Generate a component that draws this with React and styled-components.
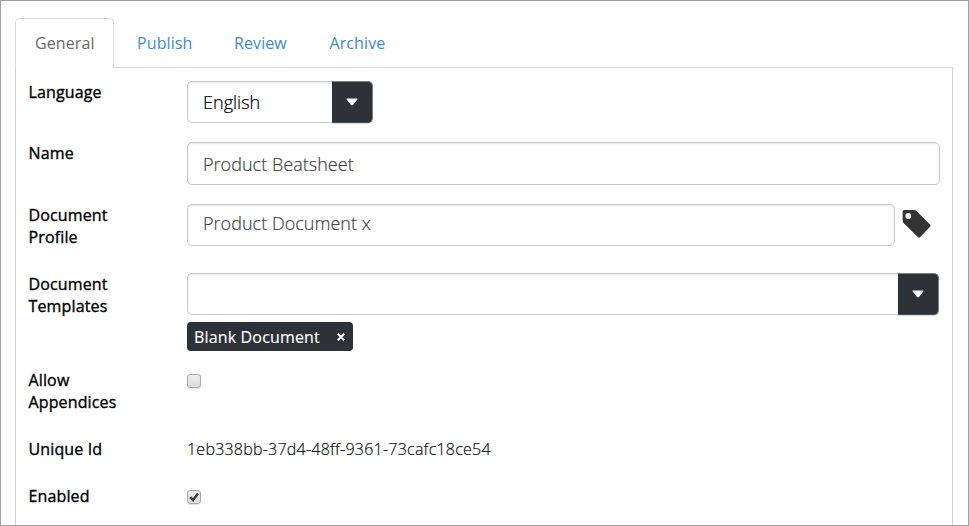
import React from 'react';
import styled, { createGlobalStyle } from 'styled-components';

const GlobalStyle = createGlobalStyle`
  * { box-sizing: border-box; }
  body { margin: 0; background: #fff; overflow: hidden; }
`;

const Frame = styled.main`
  height: 526px;
  padding: 17px 15px 0 14px;
  border: 1px solid #a0a0a0;
  overflow: hidden;
  display: flex;
  flex-direction: column;
  font: 400 16px/22px 'Open Sans', sans-serif;
  color: #333;
`;

const Tabs = styled.nav`
  display: flex;
  height: 50px;
  flex: none;
  border-bottom: 1px solid #d9d9d9;
`;

const Tab = styled.a`
  width: ${(p) => p.$width}px;
  height: 50px;
  padding: 13px 0 0 19px;
  border: 1px solid ${(p) => (p.$active ? '#d9d9d9' : 'transparent')};
  border-bottom: ${(p) => (p.$active ? '1px solid #fff' : '0')};
  border-radius: 5px 5px 0 0;
  color: ${(p) => (p.$active ? '#6a6a6a' : '#428bca')};
  letter-spacing: 0.1px;
  white-space: nowrap;

  &:first-child { margin-right: 3px; }
`;

const Panel = styled.section`
  flex: 1;
  padding: 13px 12px 0 13px;
  border: solid #d0d0d0;
  border-width: 0 1px;
`;

const Row = styled.div`
  display: grid;
  grid-template-columns: 158px 1fr;
  height: ${(p) => p.$height}px;
`;

const Label = styled.label`
  width: 110px;
  margin-left: -0.5px;
  color: #000;
  letter-spacing: 0.14px;
  -webkit-text-stroke: 0.35px #000;
`;

const Field = styled.div`
  display: flex;
  flex-direction: column;
  align-items: flex-start;
`;

const Line = styled.div`
  display: flex;
  align-items: flex-start;
  width: 100%;
`;

const Box = styled.div`
  display: flex;
  align-items: center;
  width: ${(p) => p.$width}px;
  height: ${(p) => p.$height || 42}px;
  padding: 0 0 ${(p) => p.$lift || 0}px 15px;
  border: 1px solid #c8c8c8;
  border-radius: 5px;
  box-shadow: inset 0 1px 2px rgba(0, 0, 0, 0.1);
  font-size: 18px;
  font-weight: 300;
  -webkit-text-stroke: 0.2px;
  letter-spacing: 0.03px;
  color: ${(p) => (p.$dark ? '#000' : '#444')};
`;

const Combo = styled.div`
  display: flex;
  ${Box} { border-right: 0; border-radius: 5px 0 0 5px; }
`;

const DropButton = styled.button`
  display: flex;
  align-items: center;
  justify-content: center;
  width: 41px;
  height: 42px;
  padding: 0 1px 0 0;
  border: 1px solid #7c8085;
  border-left: 0;
  border-bottom-color: #4b5058;
  border-radius: 0 5px 5px 0;
  background: #2d3138;
  box-shadow: 0 1px 1px rgba(0, 0, 0, 0.15);
`;

const TagIcon = styled.svg`
  display: block;
  margin: 5px 0 0 7px;
`;

const Chip = styled.span`
  display: flex;
  align-items: center;
  justify-content: space-between;
  width: 166px;
  height: 29px;
  margin-top: 7px;
  padding: 0 8px 0 7px;
  border-radius: 4px;
  background: #2d3138;
  color: #fff;
  letter-spacing: 0.16px;
  -webkit-text-stroke: 0.15px;
  white-space: nowrap;
`;

const Value = styled.span`
  font-weight: 300;
  color: #111;
  -webkit-text-stroke: 0.2px;
  letter-spacing: 0.23px;
`;

const CheckBox = styled.span`
  display: flex;
  align-items: center;
  justify-content: center;
  width: 14px;
  height: 14px;
  margin-top: 5px;
  border: 1px solid #aaa;
  border-radius: 3px;
  background: linear-gradient(#ededed, #dcdcdc);
  box-shadow: 0 1px 1px rgba(0, 0, 0, 0.12);
`;

const Caret = () => (
  <svg width="12" height="8" viewBox="0 0 12 8">
    <path d="M1 1H11L6.8 6.3Q6 7.2 5.2 6.3Z" fill="#fff" stroke="#fff" strokeWidth="1.2" strokeLinejoin="round" />
  </svg>
);

const tabs = [
  ['General', 99],
  ['Publish', 97],
  ['Review', 95.5],
  ['Archive', 97],
];

export default function App() {
  return (
    <>
      <GlobalStyle />
      <Frame>
        <Tabs>
          {tabs.map(([name, width], i) => (
            <Tab key={name} $width={width} $active={i === 0}>{name}</Tab>
          ))}
        </Tabs>
        <Panel>
          <Row $height={61}>
            <Label>Language</Label>
            <Combo>
              <Box $width={145} $dark>English</Box>
              <DropButton aria-label="Choose language"><Caret /></DropButton>
            </Combo>
          </Row>
          <Row $height={62}>
            <Label>Name</Label>
            <Box $width={753} $height={43}>Product Beatsheet</Box>
          </Row>
          <Row $height={69}>
            <Label>Document Profile</Label>
            <Line>
              <Box $width={708} $lift={4}>Product Document x</Box>
              <TagIcon width="29" height="29" viewBox="0 0 29 29">
                <path
                  fill="#333"
                  fillRule="evenodd"
                  d="M2.5 1H12Q13.5 1 15 2.4L28 15.5Q29 16.6 28 17.7L18.2 28Q17 29 15.8 28L2 14.5Q.6 13 .6 11V3Q.6 1 2.5 1ZM6.3 4A2.9 2.9 0 1 0 6.3 9.8A2.9 2.9 0 1 0 6.3 4Z"
                />
              </TagIcon>
            </Line>
          </Row>
          <Row $height={96}>
            <Label>Document Templates</Label>
            <Field>
              <Combo>
                <Box $width={711} />
                <DropButton aria-label="Choose template"><Caret /></DropButton>
              </Combo>
              <Chip>
                Blank Document
                <svg width="8" height="8" viewBox="0 0 8 8">
                  <path d="M.8.8 7.2 7.2M7.2.8.8 7.2" stroke="#fff" strokeWidth="2" />
                </svg>
              </Chip>
            </Field>
          </Row>
          <Row $height={69}>
            <Label>Allow Appendices</Label>
            <CheckBox role="checkbox" aria-checked="false" />
          </Row>
          <Row $height={47}>
            <Label>Unique Id</Label>
            <Value>1eb338bb-37d4-48ff-9361-73cafc18ce54</Value>
          </Row>
          <Row $height={40}>
            <Label>Enabled</Label>
            <CheckBox role="checkbox" aria-checked="true">
              <svg width="10" height="10" viewBox="0 0 10 10">
                <path d="M1.2 5.2 4 8 9 1.5" fill="none" stroke="#404040" strokeWidth="2.5" />
              </svg>
            </CheckBox>
          </Row>
        </Panel>
      </Frame>
    </>
  );
}
